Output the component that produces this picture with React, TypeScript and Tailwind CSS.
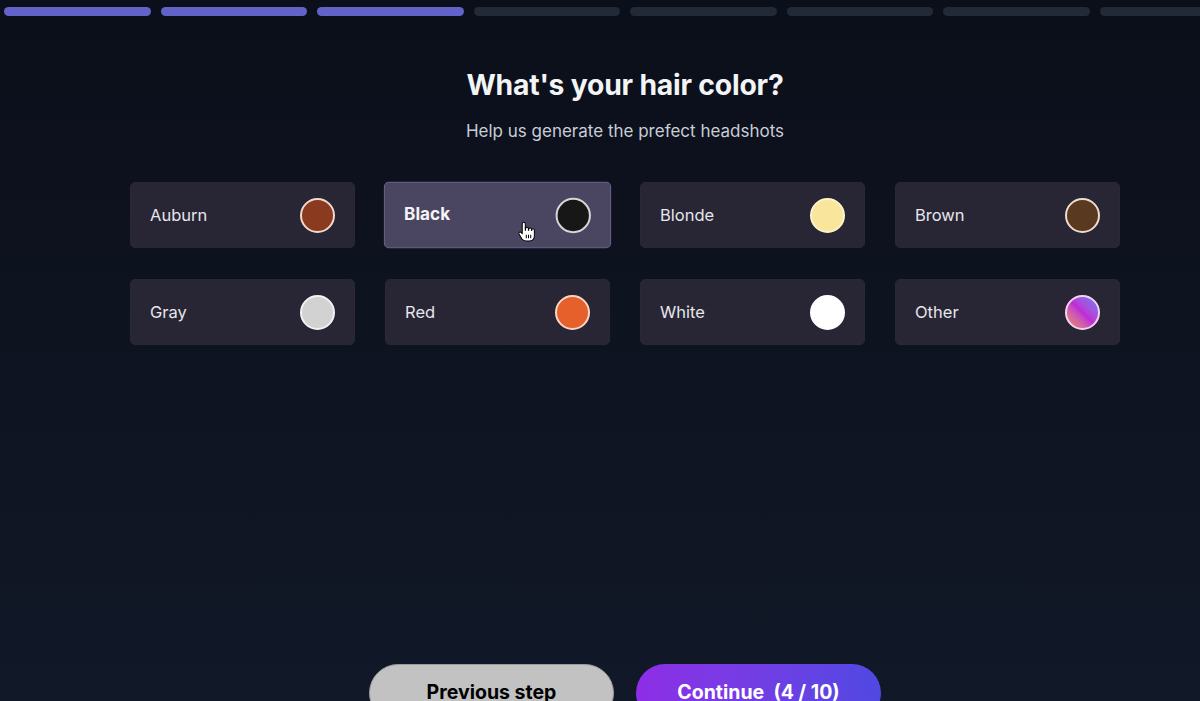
import React from "react";

type Shade = { name: string; fill: string; ring: string };

const shades: Shade[] = [
  { name: "Auburn", fill: "bg-[#8a3a1f]", ring: "border-[#f2d9cc]" },
  { name: "Black", fill: "bg-[#171717]", ring: "border-[#d6d6d6]" },
  { name: "Blonde", fill: "bg-[#f9e59c]", ring: "border-[#fdf3c8]" },
  { name: "Brown", fill: "bg-[#5a3921]", ring: "border-[#efdccb]" },
  { name: "Gray", fill: "bg-[#d2d2d2]", ring: "border-[#f2f2f2]" },
  { name: "Red", fill: "bg-[#e5602b]", ring: "border-[#f9d6c6]" },
  { name: "White", fill: "bg-white", ring: "border-white" },
  {
    name: "Other",
    fill: "bg-gradient-to-tr from-[#f08a3c] via-[#c02ad6] to-[#5b7bf0]",
    ring: "border-[#f6d2f2]",
  },
];

const steps = 10;
const done = 3;

function PointerHand() {
  return (
    <svg width="18" height="21" viewBox="0 0 18 21" className="absolute left-[132px] top-[38px]">
      <path
        d="M5.5 1.2c.9 0 1.5.7 1.5 1.6V9h.3V7.5c0-.8.6-1.4 1.4-1.4s1.4.6 1.4 1.4V9h.3V8.2c0-.8.6-1.4 1.4-1.4s1.4.6 1.4 1.4V9.4h.2V9c0-.8.6-1.3 1.3-1.3s1.3.6 1.3 1.3v5.3c0 3.2-2 5.4-5 5.4H7.6c-1.8 0-3-.8-4-2.2L.9 13.2c-.5-.7-.4-1.6.3-2.1.6-.4 1.4-.3 1.9.3L4 12.6V2.8c0-.9.6-1.6 1.5-1.6z"
        fill="white"
        stroke="black"
        strokeWidth="1"
        strokeLinejoin="round"
      />
      <path d="M8 13.5v3.6M10.2 13.5v3.6M12.4 13.5v3.6" stroke="black" strokeWidth="1" />
    </svg>
  );
}

export default function App() {
  return (
    <div
      className="relative flex h-[701px] w-[1200px] flex-col overflow-hidden bg-gradient-to-b from-[#0b0f1a] to-[#111827]"
      style={{ fontFamily: "Inter, 'Noto Sans', sans-serif" }}
    >
      {/* step progress */}
      <div className="flex gap-[10px] pl-[4px] pt-[7px]">
        {Array.from({ length: steps }).map((_, i) => (
          <div
            key={i}
            className={
              i < done
                ? "h-[9px] w-[146.5px] shrink-0 rounded-full bg-[#6262c8]"
                : "h-[9px] w-[146.5px] shrink-0 rounded-full bg-[#232a37]"
            }
          />
        ))}
      </div>

      <div className="flex flex-col items-center pl-[50px]">
        <h1 className="mt-[51px] text-[28.3px] font-bold leading-[36px] tracking-[-0.2px] text-[#f3f4f6]">
          What's your hair color?
        </h1>
        <p className="mt-[16px] text-[17px] leading-[24px] text-[#c9cdd6]">
          Help us generate the prefect headshots
        </p>

        <div className="mt-[39px] grid grid-cols-4 gap-x-[30px] gap-y-[31px]">
          {shades.map((s) => {
            const active = s.name === "Black";
            return (
              <div
                key={s.name}
                className={
                  active
                    ? "relative flex h-[66px] w-[225px] scale-[1.01] items-center justify-between rounded-[5px] border border-[#6a6486] bg-[#4a4561] pl-[19px] pr-[19px]"
                    : "relative flex h-[66px] w-[225px] items-center justify-between rounded-[5px] border border-[#2a2737] bg-[#282535] pl-[19px] pr-[19px]"
                }
              >
                <span
                  className={
                    active
                      ? "text-[17px] font-bold text-[#f4f4f6]"
                      : "text-[16.5px] font-normal text-[#e6e6ec]"
                  }
                >
                  {s.name}
                </span>
                <span className={`h-[35px] w-[35px] rounded-full border-2 ${s.ring} ${s.fill}`} />
                {active && <PointerHand />}
              </div>
            );
          })}
        </div>

        <div className="mt-[319px] flex gap-[22px]">
          <button className="h-[58px] w-[245px] rounded-full border border-[#9a9a9a] bg-[#c2c2c2] text-[19.5px] font-bold text-black">
            Previous step
          </button>
          <button className="h-[58px] w-[245px] whitespace-pre rounded-full bg-gradient-to-r from-[#8e2de6] to-[#4f48e2] text-[19.5px] font-bold text-white">
            Continue  (4 / 10)
          </button>
        </div>
      </div>
    </div>
  );
}
